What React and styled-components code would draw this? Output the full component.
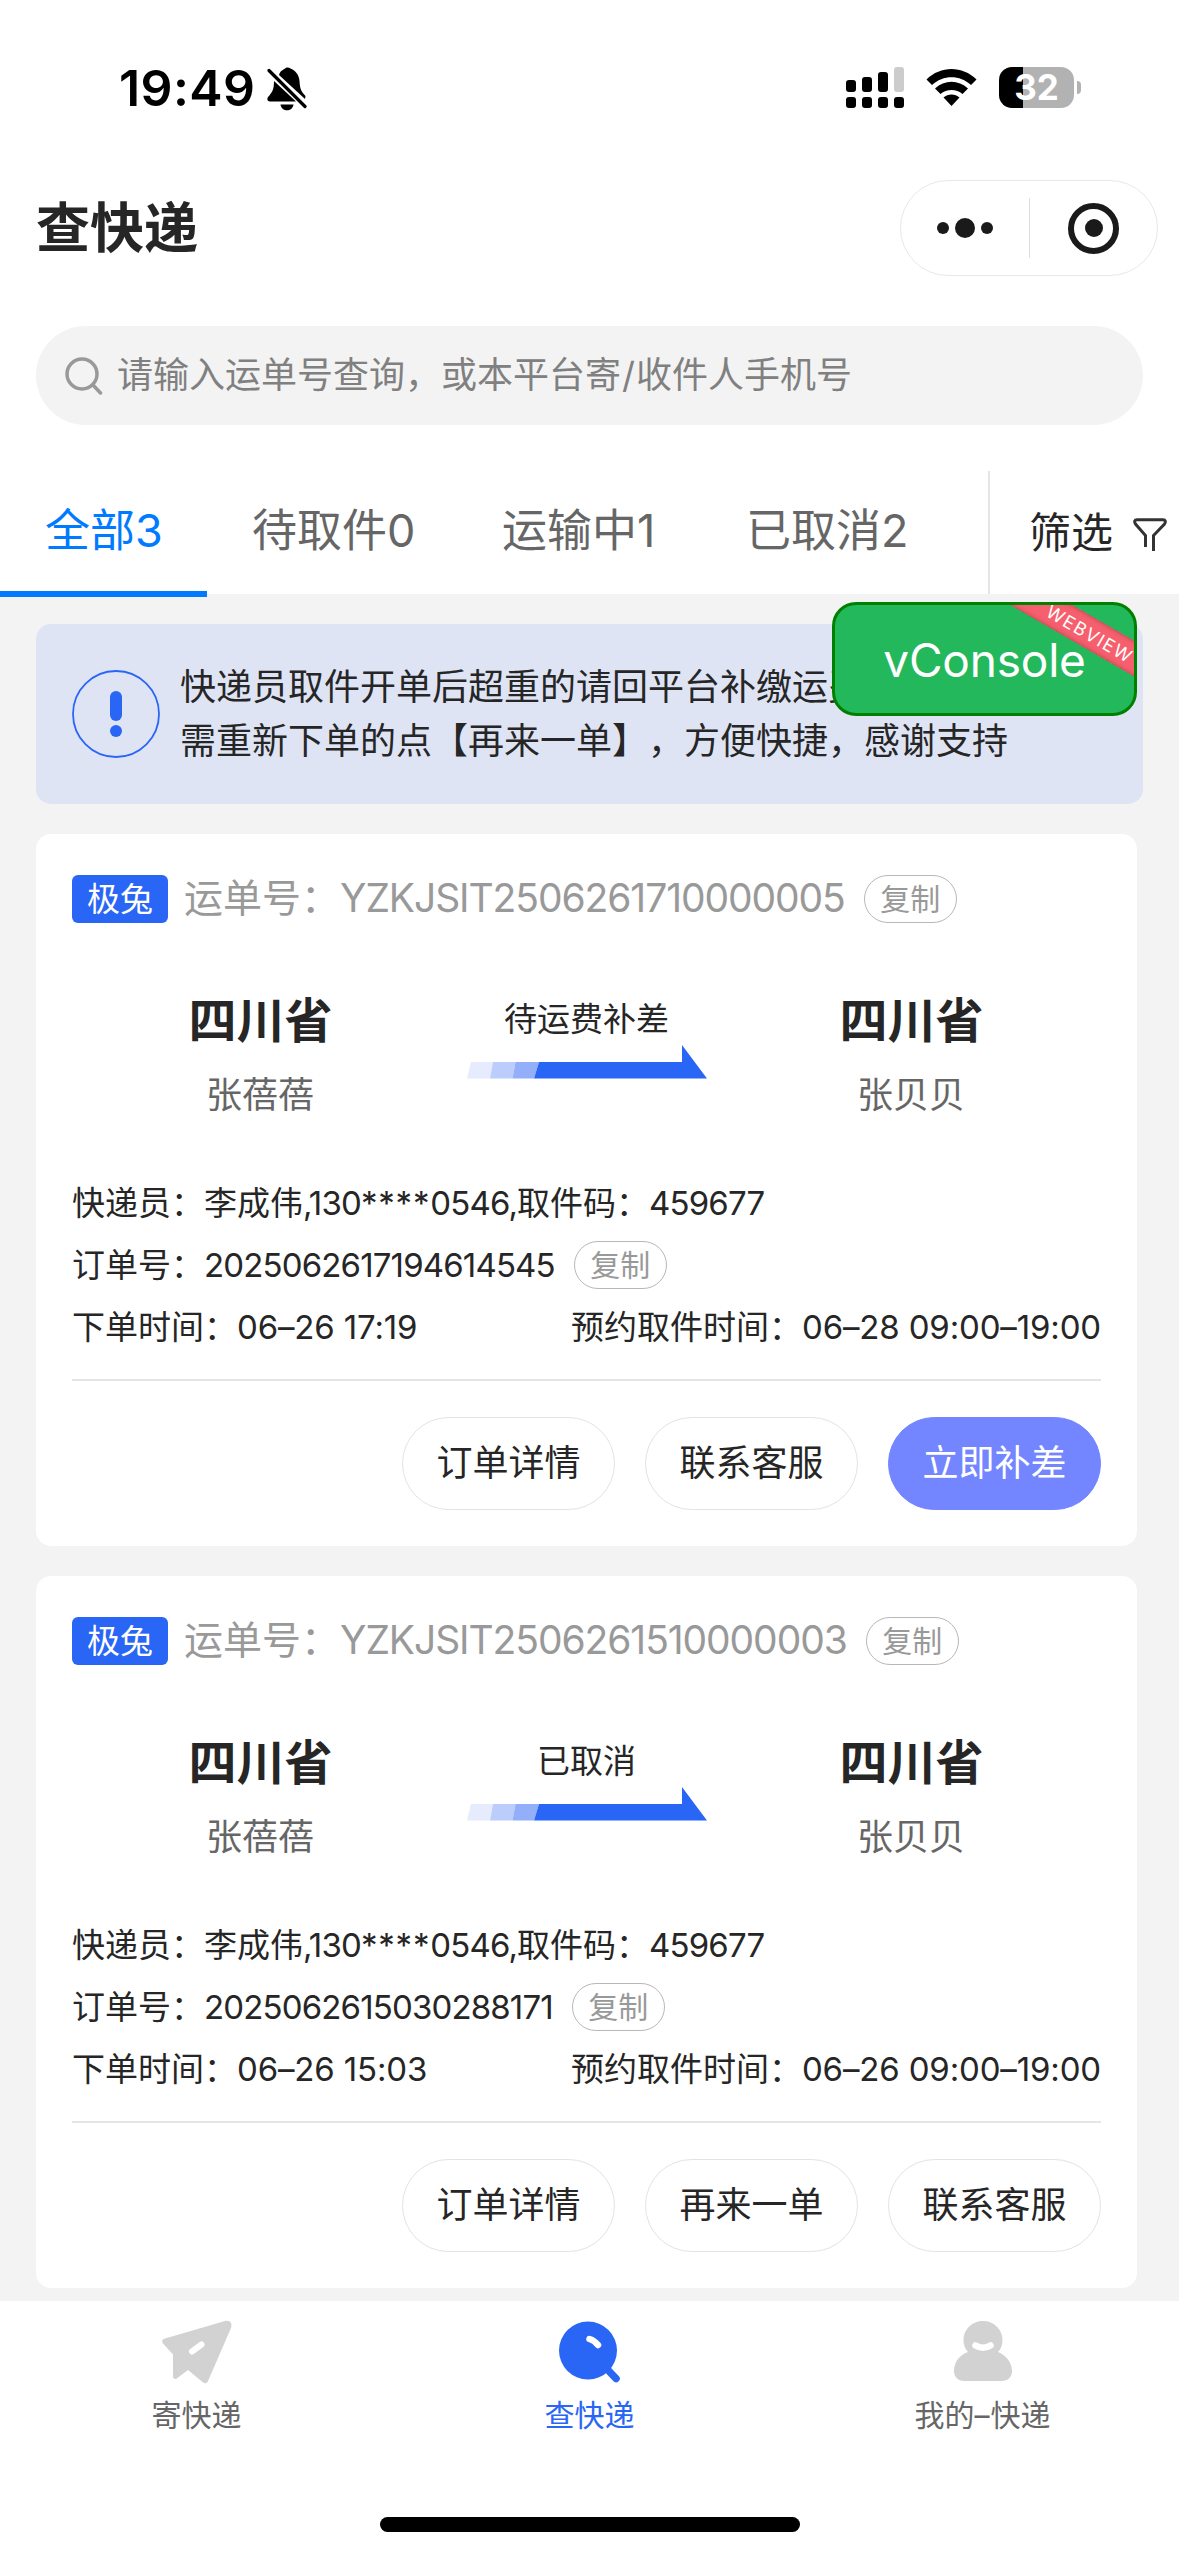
import styled, { createGlobalStyle, css } from 'styled-components';

const colors = {
  primary: '#2a66f5',
  tab: '#007aff',
  ink: '#262626',
  gray600: '#666666',
  gray400: '#999999',
  line: '#e5e5e5',
  page: '#f3f3f3',
};

const tabs = [
  { name: '全部', count: 3, width: 207 },
  { name: '待取件', count: 0, width: 250 },
  { name: '运输中', count: 1, width: 244 },
  { name: '已取消', count: 2, width: 287 },
];

const orders = [
  {
    id: '2025062617194614545',
    waybill: 'YZKJSIT2506261710000005',
    status: '待运费补差',
    created: '06–26 17:19',
    pickup: '06–28 09:00–19:00',
    actions: [
      { text: '订单详情' },
      { text: '联系客服' },
      { text: '立即补差', primary: true },
    ],
  },
  {
    id: '2025062615030288171',
    waybill: 'YZKJSIT2506261510000003',
    status: '已取消',
    created: '06–26 15:03',
    pickup: '06–26 09:00–19:00',
    actions: [
      { text: '订单详情' },
      { text: '再来一单' },
      { text: '联系客服' },
    ],
  },
];

const BellOffIcon = () => (
  <svg width="40" height="44" viewBox="0 0 40 44">
    <path d="M12 8C13 4 16 3 18 1.5C19 0 22 0 23.500 1.500C28 3.500 32 7 32.500 14C33 22 34 24 38.500 29L38 32L12 8Z" />
    <path d="M7 14L29 34.500H3C0 34.500 0 31.500 1 30C5 25.500 7 23 7 14Z" />
    <path d="M13.500 37.500H26.500C26 41.500 23 43.300 20 43.300S14 41.500 13.500 37.500Z" />
    <path d="M2 3.500L38 39.500" stroke="#000" strokeWidth="3.200" strokeLinecap="round" />
  </svg>
);

const SignalIcon = () => (
  <svg width="58" height="41" viewBox="0 0 58 41">
    <rect x="0" y="13" width="10" height="12" rx="3" />
    <rect x="16" y="10" width="10" height="15" rx="3" />
    <rect x="32" y="5" width="10" height="20" rx="3" />
    <rect x="48" y="0" width="10" height="25" rx="3" fill="#cccccc" />
    <rect x="0" y="30" width="10" height="11" rx="3" />
    <rect x="16" y="30" width="10" height="11" rx="3" />
    <rect x="32" y="30" width="10" height="11" rx="3" />
    <rect x="48" y="30" width="10" height="11" rx="3" />
  </svg>
);

const WifiIcon = () => (
  <svg width="51" height="39" viewBox="0 0 51 39">
    <path d="M0.500 12.500C14.500 -1.500 36.500 -1.500 50.500 12.500L45 18C34 7.500 17 7.500 6 18Z" />
    <path d="M9 21.500C18.500 12.500 32.500 12.500 42 21.500L36.500 27C30.500 21.500 20.500 21.500 14.500 27Z" />
    <path d="M17.500 30.500C22 26.500 29 26.500 33.500 30.500L25.500 39Z" />
  </svg>
);

const SearchIcon = () => (
  <svg width="38" height="38" viewBox="0 0 38 38" fill="none" stroke="#999" strokeWidth="3.500">
    <circle cx="17" cy="17" r="15" />
    <path d="M28 28L35.500 36" strokeLinecap="round" />
  </svg>
);

const FunnelIcon = () => (
  <svg width="34" height="34" viewBox="0 0 34 34" fill="none" stroke="#333" strokeWidth="3">
    <path d="M12.500 29V17.500L2.500 6C1 3.500 1.500 1.800 4 1.800H30C32.500 1.800 33 3.500 31.500 6L20.500 17.500V33" />
  </svg>
);

const NoticeIcon = () => (
  <svg width="88" height="88" viewBox="0 0 88 88">
    <circle cx="44" cy="44" r="43" fill="none" stroke={colors.primary} strokeWidth="1.800" />
    <rect x="38" y="21" width="12" height="30" rx="6" fill={colors.primary} />
    <circle cx="44" cy="61" r="6" fill={colors.primary} />
  </svg>
);

const ArrowIcon = () => (
  <svg width="240" height="34" viewBox="0 0 240 34">
    <path d="M4 17H26L23 33.500H0Z" fill="#e6ecfe" />
    <path d="M26 17H48.500L45.500 33.500H23Z" fill="#bccdfb" />
    <path d="M48.500 17H72L67 33.500H45.500Z" fill="#94affa" />
    <path d="M72 17H215V0L240 33.500H67Z" fill={colors.primary} />
  </svg>
);

const PlaneIcon = () => (
  <svg width="72" height="66" viewBox="0 0 72 66">
    <path
      d="M64 2L4 19.500C0.500 20.500 0.500 23 2.500 25L12 35.500V57C12 60.500 14.500 61 17 58.500L27 51L41.500 63C44 65 46 64.500 47 62L70 9C71.500 4 69 0.500 64 2Z"
      fill="#d2d2d2"
    />
    <path d="M31 32.500L40.500 25.500" stroke="#fff" strokeWidth="6" strokeLinecap="round" />
  </svg>
);

const TrackIcon = () => (
  <svg width="72" height="66" viewBox="0 0 72 66">
    <circle cx="34" cy="31.500" r="29" fill={colors.primary} />
    <path d="M52 49L62 59.500" stroke={colors.primary} strokeWidth="7.500" strokeLinecap="round" />
    <path d="M35.500 20Q40.500 21.500 44 26" fill="none" stroke="#fff" strokeWidth="6.500" strokeLinecap="round" />
  </svg>
);

const MineIcon = () => (
  <svg width="72" height="66" viewBox="0 0 72 66">
    <path
      d="M36 2C25.500 2 16.500 10 16.500 21C16.500 26 18 30 21 33C12.500 36 7 43 7 52C7 58 11 62 17.500 62H54.500C61 62 65 58 65 52C65 43 58.500 36 51 33C54 30 55.500 26 55.500 21C55.500 10 46.500 2 36 2Z"
      fill="#d2d2d2"
    />
    <path d="M28.500 26.500Q36 31 43.500 26.500" fill="none" stroke="#fff" strokeWidth="6.500" strokeLinecap="round" />
  </svg>
);

const StatusBar = () => (
  <MyStatusBar>
    <StatusGroup>
      <Clock>19:49</Clock>
      <BellOffIcon />
    </StatusGroup>
    <StatusGroup>
      <SignalIcon />
      <WifiIcon />
      <Battery>
        <BatteryBody>32</BatteryBody>
        <BatteryCap />
      </Battery>
    </StatusGroup>
  </MyStatusBar>
);

const OrderCard = ({ order }) => (
  <Card>
    <WaybillRow>
      <Carrier>极兔</Carrier>
      <Waybill>
        运单号：<WaybillNumber>{order.waybill}</WaybillNumber>
      </Waybill>
      <CopyButton>复制</CopyButton>
    </WaybillRow>
    <Route>
      <Place>
        <Province>四川省</Province>
        <Person>张蓓蓓</Person>
      </Place>
      <Progress>
        <span>{order.status}</span>
        <ArrowIcon />
      </Progress>
      <Place>
        <Province>四川省</Province>
        <Person>张贝贝</Person>
      </Place>
    </Route>
    <InfoList>
      <InfoRow>
        快递员：李成伟<Num>,130</Num>
        <Mask>****</Mask>
        <Num>0546,</Num>取件码：<Num>459677</Num>
      </InfoRow>
      <InfoRow>
        订单号：<Num>{order.id}</Num>
        <CopyButton>复制</CopyButton>
      </InfoRow>
      <InfoRow $between>
        <span>
          下单时间：<DateText>{order.created}</DateText>
        </span>
        <span>
          预约取件时间：<DateText>{order.pickup}</DateText>
        </span>
      </InfoRow>
    </InfoList>
    <Actions>
      {order.actions.map(({ text, primary }) => (
        <ActionButton key={text} $primary={primary}>
          {text}
        </ActionButton>
      ))}
    </Actions>
  </Card>
);

export default function App() {
  return (
    <Page>
      <GlobalStyle />
      <StatusBar />
      <Header>
        <Title>查快递</Title>
        <Capsule>
          <More>
            <Dot $size={12} />
            <Dot $size={20} />
            <Dot $size={12} />
          </More>
          <CapsuleLine />
          <Close>
            <Dot $size={18} />
          </Close>
        </Capsule>
      </Header>
      <SearchBar>
        <SearchIcon />
        请输入运单号查询，或本平台寄<Slash>/</Slash>收件人手机号
      </SearchBar>
      <TabRow>
        {tabs.map(({ name, count, width }, i) => (
          <Tab key={name} $width={width} $active={i === 0}>
            {name}
            <Count>{count}</Count>
          </Tab>
        ))}
        <Filter>
          筛选
          <FunnelIcon />
        </Filter>
      </TabRow>
      <Content>
        <Notice>
          <NoticeIcon />
          <NoticeText>
            快递员取件开单后超重的请回平台补缴运费
            <br />
            需重新下单的点【再来一单】，方便快捷，感谢支持
          </NoticeText>
        </Notice>
        {orders.map((order) => (
          <OrderCard key={order.id} order={order} />
        ))}
        <VConsole>
          vConsole
          <Ribbon>WEBVIEW</Ribbon>
        </VConsole>
      </Content>
      <TabBar>
        <NavItems>
          <NavItem>
            <PlaneIcon />
            寄快递
          </NavItem>
          <NavItem $active>
            <TrackIcon />
            查快递
          </NavItem>
          <NavItem>
            <MineIcon />
            <span>
              我的<Dash>–</Dash>快递
            </span>
          </NavItem>
        </NavItems>
        <HomeIndicator />
      </TabBar>
    </Page>
  );
}

const GlobalStyle = createGlobalStyle`
  body {
    margin: 0;
    background: #fff;
  }

  * {
    box-sizing: border-box;
  }

  svg {
    display: block;
    flex: none;
  }

  button {
    font: inherit;
    padding: 0;
  }
`;

const Page = styled.div`
  display: flex;
  flex-direction: column;
  width: 1179px;
  height: 2556px;
  overflow: hidden;
  background: #fff;
  color: ${colors.ink};
  font-family: Inter, 'Noto Sans CJK SC', sans-serif;
  text-spacing-trim: space-all;
  white-space: nowrap;
`;

const MyStatusBar = styled.div`
  display: flex;
  justify-content: space-between;
  height: 177px;
  padding: 67px 98px 0 119px;
`;

const StatusGroup = styled.div`
  display: flex;
  align-items: flex-start;

  > svg:first-child {
    margin-right: 22px;
  }
`;

const Clock = styled.div`
  width: 148px;
  font-size: 50px;
  font-weight: 600;
  line-height: 42px;
  letter-spacing: 0.4px;
  color: #000;
`;

const Battery = styled.div`
  display: flex;
  align-items: center;
  gap: 3px;
  margin-left: 22px;
`;

const BatteryBody = styled.div`
  width: 75px;
  height: 41px;
  border-radius: 13px;
  background: linear-gradient(90deg, #000 24px, #b2b2b2 24px);
  color: #fff;
  font-size: 35px;
  font-weight: 700;
  line-height: 41px;
  text-align: center;
`;

const BatteryCap = styled.div`
  width: 4px;
  height: 13px;
  border-radius: 0 4px 4px 0;
  background: #b2b2b2;
`;

const Header = styled.div`
  display: flex;
  align-items: center;
  justify-content: space-between;
  height: 102px;
  padding: 0 21px 0 36px;
`;

const Title = styled.div`
  font-size: 54px;
  font-weight: 600;
  line-height: 103px;
`;

const Capsule = styled.div`
  display: flex;
  align-items: center;
  width: 258px;
  height: 96px;
  border: 1px solid #e8e8e8;
  border-radius: 48px;
`;

const More = styled.div`
  display: flex;
  flex: 1;
  align-items: center;
  justify-content: center;
  gap: 6px;
`;

const Dot = styled.div`
  width: ${({ $size }) => $size}px;
  height: ${({ $size }) => $size}px;
  border-radius: 50%;
  background: #1a1a1a;
`;

const CapsuleLine = styled.div`
  width: 1px;
  height: 60px;
  background: #dedede;
`;

const Close = styled.div`
  display: flex;
  align-items: center;
  justify-content: center;
  width: 51px;
  height: 51px;
  margin: 0 38px;
  border: 6px solid #1a1a1a;
  border-radius: 50%;
`;

const SearchBar = styled.div`
  display: flex;
  align-items: center;
  height: 99px;
  margin: 47px 36px 46px;
  padding-left: 29px;
  border-radius: 50px;
  background: ${colors.page};
  color: #808080;
  font-size: 36px;
  line-height: 101px;

  > svg {
    margin-right: 14px;
  }
`;

const Slash = styled.span`
  width: 15px;
  text-align: center;
`;

const TabRow = styled.div`
  display: flex;
  flex: none;
  height: 123px;
`;

const Tab = styled.div`
  position: relative;
  width: ${({ $width }) => $width}px;
  padding-left: 45px;
  color: ${({ $active }) => ($active ? colors.tab : colors.gray600)};
  font-size: 45px;
  line-height: 119px;

  ${({ $active }) =>
    $active &&
    css`
      &::after {
        content: '';
        position: absolute;
        z-index: 1;
        right: 0;
        bottom: -3px;
        left: 0;
        height: 6px;
        background: ${colors.tab};
      }
    `}
`;

const Count = styled.span`
  letter-spacing: -0.5px;
`;

const Filter = styled.div`
  display: flex;
  flex: 1;
  align-items: center;
  gap: 20px;
  padding-left: 39px;
  border-left: 2px solid ${colors.line};
  font-size: 42px;
  line-height: 120px;

  > svg {
    margin-top: 5px;
  }
`;

const Content = styled.div`
  position: relative;
  display: flex;
  flex: none;
  flex-direction: column;
  gap: 30px;
  height: 1707px;
  padding: 30px 42px 0 36px;
  background: ${colors.page};
`;

const Notice = styled.div`
  display: flex;
  flex: none;
  align-items: center;
  gap: 20px;
  height: 180px;
  margin-right: -6px;
  padding-left: 36px;
  border-radius: 15px;
  background: #dfe4f5;
`;

const NoticeText = styled.div`
  font-size: 36px;
  line-height: 54px;
`;

const Card = styled.div`
  flex: none;
  height: 712px;
  padding: 41px 36px 36px;
  border-radius: 15px;
  background: #fff;
`;

const WaybillRow = styled.div`
  display: flex;
  align-items: center;
  height: 48px;
`;

const Carrier = styled.div`
  width: 96px;
  height: 48px;
  border-radius: 6px;
  background: ${colors.primary};
  color: #fff;
  font-size: 33px;
  line-height: 48px;
  text-align: center;
`;

const Waybill = styled.div`
  margin-left: 16px;
  padding-bottom: 3px;
  color: ${colors.gray400};
  font-size: 39px;
  line-height: 47px;
`;

const WaybillNumber = styled.span`
  letter-spacing: -1.08px;
`;

const CopyButton = styled.button`
  width: 93px;
  height: 48px;
  margin-left: 19px;
  border: 1px solid #b8b8b8;
  border-radius: 24px;
  background: #fff;
  color: ${colors.gray400};
  font-size: 30px;
  line-height: 43px;
`;

const Route = styled.div`
  display: flex;
  height: 238px;
  padding-top: 65px;
  text-align: center;
`;

const Place = styled.div`
  width: 377px;

  &:last-child {
    padding-right: 2px;
  }
`;

const Province = styled.div`
  font-size: 48px;
  font-weight: 600;
  line-height: 66px;
`;

const Person = styled.div`
  margin-top: 15px;
  padding-right: 1px;
  color: ${colors.gray600};
  font-size: 36px;
  line-height: 52px;
`;

const Progress = styled.div`
  display: flex;
  flex: 1;
  flex-direction: column;
  align-items: center;
  font-size: 33px;

  > span {
    height: 57px;
    line-height: 63px;
  }
`;

const InfoList = styled.div`
  padding: 11px 0 21px;
  border-bottom: 2px solid ${colors.line};
`;

const InfoRow = styled.div`
  display: flex;
  align-items: center;
  justify-content: ${({ $between }) => ($between ? 'space-between' : 'flex-start')};
  height: 62px;
  font-size: 33px;
  line-height: 62px;
`;

const Num = styled.span`
  letter-spacing: -0.85px;
`;

const Mask = styled(Num)`
  letter-spacing: 0.8px;
`;

const DateText = styled(Num)`
  letter-spacing: -0.15px;
`;

const Actions = styled.div`
  display: flex;
  justify-content: flex-end;
  gap: 30px;
  padding-top: 36px;
`;

const ActionButton = styled.button`
  width: 213px;
  height: 93px;
  border: 1px solid ${({ $primary }) => ($primary ? '#7386ff' : '#e3e3e3')};
  border-radius: 47px;
  background: ${({ $primary }) => ($primary ? '#7386ff' : '#fff')};
  color: ${({ $primary }) => ($primary ? '#fff' : colors.ink)};
  font-size: 36px;
  line-height: ${({ $primary }) => ($primary ? 91 : 87)}px;
`;

const VConsole = styled.div`
  position: absolute;
  top: 8px;
  left: 832px;
  width: 305px;
  height: 114px;
  overflow: hidden;
  border: 3px solid #008000;
  border-radius: 24px;
  background: #23b85c;
  color: #fff;
  font-size: 46px;
  letter-spacing: -0.2px;
  line-height: 111px;
  text-align: center;
`;

const Ribbon = styled.div`
  position: absolute;
  top: 12px;
  left: 154px;
  width: 200px;
  height: 31px;
  padding-left: 3px;
  transform: rotate(30deg);
  background: #f65f6d;
  box-shadow: 0 0 5px rgba(0, 0, 0, 0.3) inset;
  font-size: 18px;
  letter-spacing: 1.5px;
  line-height: 33px;
`;

const TabBar = styled.div`
  flex: 1;
  padding-top: 18px;
  background: #fff;
`;

const NavItems = styled.div`
  display: flex;
  height: 198px;
`;

const NavItem = styled.div`
  display: flex;
  flex: 1;
  flex-direction: column;
  align-items: center;
  gap: 7px;
  color: ${({ $active }) => ($active ? colors.primary : colors.gray600)};
  font-size: 30px;
  line-height: 46px;
`;

const Dash = styled.span`
  letter-spacing: 1px;
`;

const HomeIndicator = styled.div`
  width: 420px;
  height: 15px;
  margin: 0 auto;
  border-radius: 8px;
  background: #000;
`;
